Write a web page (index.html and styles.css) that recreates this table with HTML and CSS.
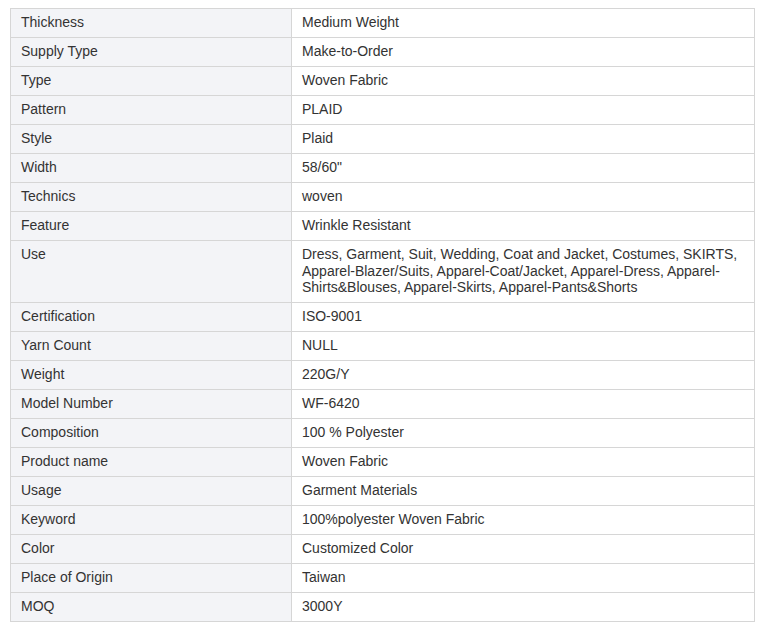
FILE: index.html
```html
<!DOCTYPE html>
<html>
<head>
<meta charset="utf-8">
<link rel="stylesheet" href="styles.css">
</head>
<body>
<div class="wrap">
<table class="spec">
<tbody>
<tr><td class="k">Thickness</td><td class="v">Medium Weight</td></tr>
<tr><td class="k">Supply Type</td><td class="v">Make-to-Order</td></tr>
<tr><td class="k">Type</td><td class="v">Woven Fabric</td></tr>
<tr><td class="k">Pattern</td><td class="v">PLAID</td></tr>
<tr><td class="k">Style</td><td class="v">Plaid</td></tr>
<tr><td class="k">Width</td><td class="v">58/60"</td></tr>
<tr><td class="k">Technics</td><td class="v">woven</td></tr>
<tr><td class="k">Feature</td><td class="v">Wrinkle Resistant</td></tr>
<tr><td class="k">Use</td><td class="v">Dress, Garment, Suit, Wedding, Coat and Jacket, Costumes, SKIRTS, Apparel-Blazer/Suits, Apparel-Coat/Jacket, Apparel-Dress, Apparel-Shirts&amp;Blouses, Apparel-Skirts, Apparel-Pants&amp;Shorts</td></tr>
<tr><td class="k">Certification</td><td class="v">ISO-9001</td></tr>
<tr><td class="k">Yarn Count</td><td class="v">NULL</td></tr>
<tr><td class="k">Weight</td><td class="v">220G/Y</td></tr>
<tr><td class="k">Model Number</td><td class="v">WF-6420</td></tr>
<tr><td class="k">Composition</td><td class="v">100 % Polyester</td></tr>
<tr><td class="k">Product name</td><td class="v">Woven Fabric</td></tr>
<tr><td class="k">Usage</td><td class="v">Garment Materials</td></tr>
<tr><td class="k">Keyword</td><td class="v">100%polyester Woven Fabric</td></tr>
<tr><td class="k">Color</td><td class="v">Customized Color</td></tr>
<tr><td class="k">Place of Origin</td><td class="v">Taiwan</td></tr>
<tr><td class="k">MOQ</td><td class="v">3000Y</td></tr>
</tbody>
</table>
</div>
</body>
</html>
```

FILE: styles.css
```css
html, body {
  margin: 0;
  padding: 0;
  background: #fff;
}
.wrap {
  padding: 8px 8px 0 10px;
}
.spec {
  width: 745px;
  border-collapse: collapse;
  font-family: "Liberation Sans", Arial, sans-serif;
  font-size: 14px;
  color: #333;
  table-layout: fixed;
}
.spec td {
  border: 1px solid #d6d6d6;
  padding: 5px 10px 6.5px;
  line-height: 16.5px;
  vertical-align: top;
  text-align: left;
}
.spec .k {
  width: 260px;
  background: #f3f4f7;
}
.spec .v {
  background: #fff;
}
```
